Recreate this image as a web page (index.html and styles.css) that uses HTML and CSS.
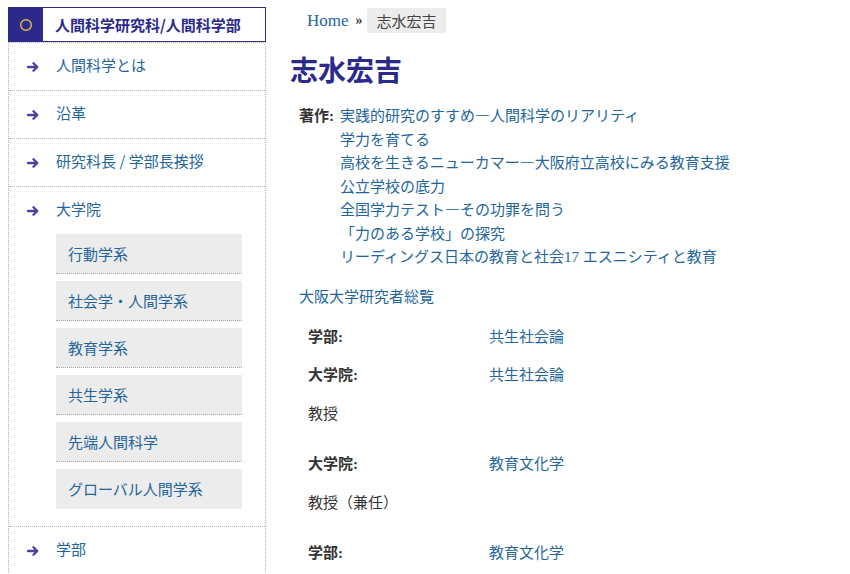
FILE: index.html
```html
<!DOCTYPE html>
<html lang="ja">
<head>
<meta charset="utf-8">
<title>志水宏吉</title>
<link rel="stylesheet" href="styles.css">
</head>
<body>
<div class="page">
  <aside class="sidebar">
    <div class="side-head">
      <span class="head-mark"><svg width="14" height="14" viewBox="0 0 14 14"><circle cx="7" cy="7" r="5.3" fill="none" stroke="#d8b84c" stroke-width="1.5"/></svg></span>
      <span class="head-title">人間科学研究科<span class="cjk">/</span>人間科学部</span>
    </div>
    <ul class="menu">
      <li class="menu-item"><a class="menu-link" href="#"><svg class="arrow" width="12" height="10" viewBox="0 0 12 10"><path d="M1 5H10M6.5 1.3L10.3 5L6.5 8.7" fill="none" stroke="#4a42a0" stroke-width="2.3" stroke-linecap="round" stroke-linejoin="round"/></svg>人間科学とは</a></li>
      <li class="menu-item"><a class="menu-link" href="#"><svg class="arrow" width="12" height="10" viewBox="0 0 12 10"><path d="M1 5H10M6.5 1.3L10.3 5L6.5 8.7" fill="none" stroke="#4a42a0" stroke-width="2.3" stroke-linecap="round" stroke-linejoin="round"/></svg>沿革</a></li>
      <li class="menu-item"><a class="menu-link" href="#"><svg class="arrow" width="12" height="10" viewBox="0 0 12 10"><path d="M1 5H10M6.5 1.3L10.3 5L6.5 8.7" fill="none" stroke="#4a42a0" stroke-width="2.3" stroke-linecap="round" stroke-linejoin="round"/></svg><span>研究科長<span class="cjk"> / </span>学部長挨拶</span></a></li>
      <li class="menu-item has-sub"><a class="menu-link" href="#"><svg class="arrow" width="12" height="10" viewBox="0 0 12 10"><path d="M1 5H10M6.5 1.3L10.3 5L6.5 8.7" fill="none" stroke="#4a42a0" stroke-width="2.3" stroke-linecap="round" stroke-linejoin="round"/></svg>大学院</a>
        <ul class="submenu">
          <li><a class="sub-link" href="#">行動学系</a></li>
          <li><a class="sub-link" href="#">社会学・人間学系</a></li>
          <li><a class="sub-link" href="#">教育学系</a></li>
          <li><a class="sub-link" href="#">共生学系</a></li>
          <li><a class="sub-link" href="#">先端人間科学</a></li>
          <li><a class="sub-link last" href="#">グローバル人間学系</a></li>
        </ul>
      </li>
      <li class="menu-item"><a class="menu-link" href="#"><svg class="arrow" width="12" height="10" viewBox="0 0 12 10"><path d="M1 5H10M6.5 1.3L10.3 5L6.5 8.7" fill="none" stroke="#4a42a0" stroke-width="2.3" stroke-linecap="round" stroke-linejoin="round"/></svg>学部</a></li>
    </ul>
  </aside>
  <main class="main">
    <nav class="crumbs">
      <a class="crumb-home" href="#">Home</a>
      <span class="crumb-sep">»</span>
      <span class="crumb-current">志水宏吉</span>
    </nav>
    <h1 class="title">志水宏吉</h1>
    <div class="works">
      <span class="works-label">著作:</span>
      <ul class="works-list">
        <li><a href="#">実践的研究のすすめ<span class="cjk">―</span>人間科学のリアリティ</a></li>
        <li><a href="#">学力を育てる</a></li>
        <li><a href="#">高校を生きるニューカマー<span class="cjk">―</span>大阪府立高校にみる教育支援</a></li>
        <li><a href="#">公立学校の底力</a></li>
        <li><a href="#">全国学力テスト<span class="cjk">―</span>その功罪を問う</a></li>
        <li><a href="#">「力のある学校」の探究</a></li>
        <li><a href="#">リーディングス日本の教育と社会17 エスニシティと教育</a></li>
      </ul>
    </div>
    <p class="directory"><a href="#">大阪大学研究者総覧</a></p>
    <div class="affil">
      <div class="group">
        <div class="row"><span class="label">学部:</span><a class="value" href="#">共生社会論</a></div>
        <div class="row"><span class="label">大学院:</span><a class="value" href="#">共生社会論</a></div>
        <div class="row"><span class="post">教授</span></div>
      </div>
      <div class="group">
        <div class="row"><span class="label">大学院:</span><a class="value" href="#">教育文化学</a></div>
        <div class="row"><span class="post">教授（兼任）</span></div>
      </div>
      <div class="group">
        <div class="row"><span class="label">学部:</span><a class="value" href="#">教育文化学</a></div>
      </div>
    </div>
  </main>
</div>
</body>
</html>
```
FILE: styles.css
```css
* { box-sizing: border-box; }
html, body { margin: 0; padding: 0; background: #fff; }
body {
  font-family: "Liberation Serif", "Noto Sans CJK JP", serif;
  font-size: 15px;
  color: #333;
  overflow: hidden;
}
a { text-decoration: none; color: #24669c; }
ul { list-style: none; margin: 0; padding: 0; }
.cjk { font-family: "Noto Sans CJK JP", sans-serif; line-height: 0; }

.page {
  display: flex;
  align-items: flex-start;
  gap: 24px;
  padding: 7px 0 0 8px;
}

.sidebar { width: 258px; flex: none; }
.side-head {
  display: flex;
  height: 35px;
  border: 1px solid #2b2a8a;
}
.head-mark {
  width: 34px;
  background: #2b2a8a;
  display: flex;
  align-items: center;
  justify-content: center;
  padding-right: 1px;
}
.head-title {
  flex: 1;
  display: flex;
  align-items: center;
  padding-left: 12px;
  font-weight: bold;
  color: #2b2a8a;
  font-size: 15px;
  white-space: nowrap;
}

.menu {
  border-left: 1px dotted #b5b5b5;
  border-right: 1px dotted #b5b5b5;
  border-top: 1px dotted #b5b5b5;
}
.menu-item { border-bottom: 1px dotted #b5b5b5; }
.menu-link {
  display: flex;
  align-items: center;
  height: 47px;
  padding-left: 18px;
  gap: 17px;
  color: #24669c;
  line-height: 1;
}
.arrow { flex: none; }
.submenu {
  padding: 0 23px 17px 47px;
  display: flex;
  flex-direction: column;
  gap: 7px;
}
.sub-link {
  display: flex;
  align-items: center;
  height: 40px;
  padding-left: 12px;
  background: #ececec;
  border-bottom: 1px dotted #a8a8a8;
  color: #24669c;
}
.sub-link.last { border-bottom: 1px solid #ececec; }

.main { flex: 1; padding-top: 1px; }
.crumbs {
  display: flex;
  align-items: center;
  height: 25px;
  padding-left: 17px;
}
.crumb-home { font-size: 17px; color: #24669c; }
.crumb-sep { margin: 0 4px 0 7px; font-size: 14px; font-weight: bold; color: #333; }
.crumb-current {
  background: #ececec;
  height: 25px;
  display: flex;
  align-items: center;
  padding: 0 9px 0 10px;
  color: #444;
}
.title {
  margin: 21px 0 0;
  font-size: 28px;
  line-height: 36px;
  color: #2b2a8a;
  font-weight: bold;
}
.works {
  display: flex;
  margin-top: 15px;
  padding-left: 9px;
  line-height: 23.5px;
}
.works-list li { height: 23.5px; }
.works-label { width: 41px; font-weight: bold; color: #333; flex: none; }
.directory { margin: 16px 0 0; padding-left: 9px; line-height: 23.5px; }
.affil { margin-top: 7px; display: flex; flex-direction: column; gap: 12px; }
.row {
  display: flex;
  align-items: center;
  height: 38.5px;
  padding-left: 18px;
}
.label { width: 181px; font-weight: bold; color: #333; }
.post { color: #333; }
```
